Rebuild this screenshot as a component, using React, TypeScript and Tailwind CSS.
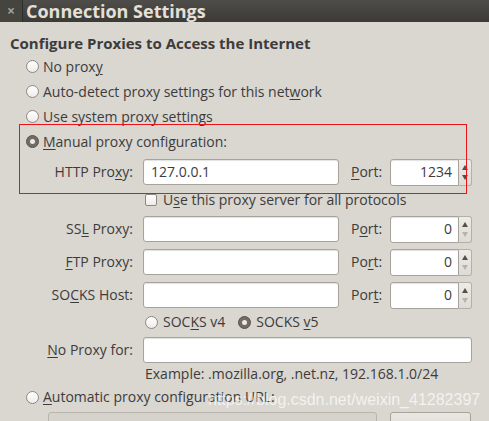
import type { ReactNode } from "react";

const FONT = { fontFamily: '"Open Sans", "Noto Sans", "DejaVu Sans", sans-serif' };

function Radio({ checked = false }: { checked?: boolean }) {
  return checked ? (
    <span className="flex h-[13px] w-[13px] shrink-0 items-center justify-center rounded-full border border-[#5a534d] bg-[#736b64]">
      <span className="h-[5px] w-[5px] rounded-full bg-[#ece9e6]" />
    </span>
  ) : (
    <span className="h-[13px] w-[13px] shrink-0 rounded-full border border-[#8d8883] bg-gradient-to-b from-[#ffffff] to-[#eeece9]" />
  );
}

function U({ children }: { children: ReactNode }) {
  return <span className="underline decoration-1 underline-offset-2">{children}</span>;
}

function Entry({ value, className = "" }: { value?: string; className?: string }) {
  return (
    <div
      className={`flex h-[26px] items-center rounded-[3px] border border-[#a7a29c] bg-white px-[7px] shadow-[inset_0_1px_1px_rgba(0,0,0,0.12)] ${className}`}
    >
      {value}
    </div>
  );
}

function Spin({ value, canDown }: { value: string; canDown: boolean }) {
  return (
    <div className="flex h-[27px]">
      <div className="flex h-[27px] w-[69px] items-center justify-end rounded-l-[3px] border border-[#a7a29c] bg-white pr-[6px] shadow-[inset_0_1px_1px_rgba(0,0,0,0.12)]">
        {value}
      </div>
      <div className="flex w-[13px] flex-col items-center justify-between rounded-r-[3px] border border-l-0 border-[#b3afa9] bg-gradient-to-b from-[#eeebe8] to-[#dedad5] py-[5px]">
        <span className="h-0 w-0 border-x-[3px] border-b-[5px] border-x-transparent border-b-[#55504b]" />
        <span
          className={`h-0 w-0 border-x-[3px] border-t-[5px] border-x-transparent ${
            canDown ? "border-t-[#55504b]" : "border-t-[#b7b2ac]"
          }`}
        />
      </div>
    </div>
  );
}

function ProxyRow({ label, port, value, portValue = "0", canDown = false }: {
  label: ReactNode;
  port: ReactNode;
  value?: string;
  portValue?: string;
  canDown?: boolean;
}) {
  return (
    <div className="flex h-[26px] items-center">
      <div className="w-[133px] whitespace-nowrap text-right">{label}</div>
      <Entry value={value} className="ml-[10px] w-[196px]" />
      <div className="ml-[12px] w-[39px]">{port}</div>
      <Spin value={portValue} canDown={canDown} />
    </div>
  );
}

export default function App() {
  return (
    <div
      className="relative h-[421px] w-[489px] overflow-hidden bg-[#dad6d0] text-[14px] leading-[18px] text-[#3c3c3c]"
      style={FONT}
    >
      {/* window title */}
      <div className="flex h-[22px] items-center bg-gradient-to-b from-[#4e4d49] to-[#3b3a36]">
        <div className="flex h-full w-[22px] items-center justify-center bg-[#45443f] text-[14px] font-bold text-[#a19e98]">
          ×
        </div>
        <div className="h-full w-px bg-[#2e2d2a]" />
        <span className="ml-[3px] text-[18px] font-bold leading-[20px] text-[#e4e0d8]">Connection Settings</span>
      </div>

      <div className="mt-[13px] pl-[10px] text-[15px] font-bold leading-[16px]">
        Configure Proxies to Access the Internet
      </div>

      <div className="mt-[3px] pl-[26px]">
        <div className="flex h-[25px] items-center gap-[4px]">
          <Radio />
          <span>No prox<U>y</U></span>
        </div>
        <div className="flex h-[25px] items-center gap-[4px]">
          <Radio />
          <span>Auto-detect proxy settings for this net<U>w</U>ork</span>
        </div>
        <div className="flex h-[25px] items-center gap-[4px]">
          <Radio />
          <span><U>U</U>se system proxy settings</span>
        </div>
        <div className="flex h-[25px] items-center gap-[4px]">
          <Radio checked />
          <span><U>M</U>anual proxy configuration:</span>
        </div>
      </div>

      <div className="mt-[5px]">
        <ProxyRow
          label={<>HTTP Pro<U>x</U>y:</>}
          port={<><U>P</U>ort:</>}
          value="127.0.0.1"
          portValue="1234"
          canDown
        />
        <div className="mt-[5px] mb-[6px] flex h-[20px] items-center gap-[6px] pl-[145px]">
          <span className="h-[12px] w-[12px] rounded-[2px] border border-[#8d8883] bg-gradient-to-b from-white to-[#eeece9]" />
          <span>U<U>s</U>e this proxy server for all protocols</span>
        </div>
        <ProxyRow label={<>SS<U>L</U> Proxy:</>} port={<>P<U>o</U>rt:</>} />
        <div className="h-[7px]" />
        <ProxyRow label={<><U>F</U>TP Proxy:</>} port={<>Po<U>r</U>t:</>} />
        <div className="h-[7px]" />
        <ProxyRow label={<>SO<U>C</U>KS Host:</>} port={<>Por<U>t</U>:</>} />

        <div className="mt-[3px] flex h-[22px] items-center pl-[145px]">
          <Radio />
          <span className="ml-[5px]">SOC<U>K</U>S v4</span>
          <span className="ml-[13px]"><Radio checked /></span>
          <span className="ml-[5px]">SOCKS <U>v</U>5</span>
        </div>

        <div className="mt-[4px] flex h-[26px] items-center">
          <div className="w-[133px] text-right"><U>N</U>o Proxy for:</div>
          <Entry className="ml-[10px] w-[329px]" />
        </div>
        <div className="mt-[2px] h-[18px] pl-[145px]">Example: .mozilla.org, .net.nz, 192.168.1.0/24</div>
      </div>

      <div className="mt-[2px] flex h-[24px] items-center gap-[4px] pl-[26px]">
        <Radio />
        <span><U>A</U>utomatic proxy configuration URL:</span>
      </div>

      <div className="mt-[3px] flex">
        <div className="ml-[48px] h-[26px] w-[329px] rounded-[3px] border border-[#b9b4ae] bg-[#d6d2cc]" />
        <div className="ml-[13px] h-[26px] w-[81px] rounded-[3px] border border-[#a7a29c] bg-gradient-to-b from-[#ebe8e4] to-[#d8d4ce]" />
      </div>

      {/* annotation box drawn over the screenshot */}
      <div className="pointer-events-none absolute left-[19px] top-[124px] h-[70px] w-[448px] border border-[#e8141b]" />

      {/* watermark */}
      <div
        className="pointer-events-none absolute left-[208px] top-[390px] text-[16px] leading-[19px] text-white/70"
        style={{ fontFamily: '"Liberation Sans", Arial, sans-serif' }}
      >
        https://blog.csdn.net/weixin_41282397
      </div>
    </div>
  );
}
